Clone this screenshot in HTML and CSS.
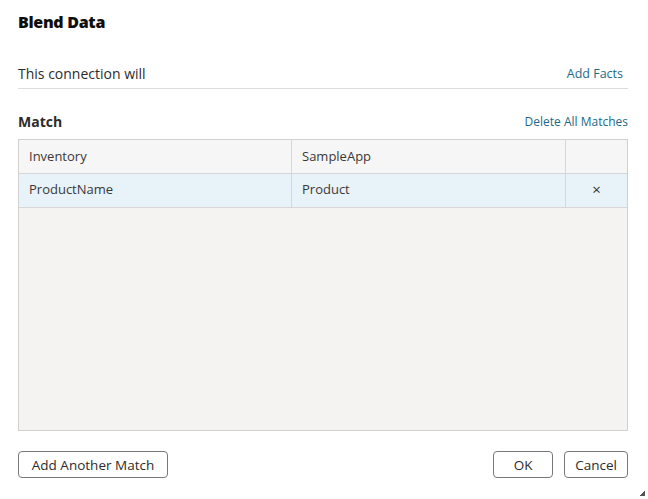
FILE: index.html
```html
<!DOCTYPE html>
<html>
<head>
<meta charset="utf-8">
<link rel="stylesheet" href="styles.css">
</head>
<body>
<div class="dialog">
  <h1 class="title">Blend Data</h1>
  <div class="conn-row">
    <span class="conn-text">This connection will</span>
    <a class="link">Add Facts</a>
  </div>
  <div class="match-row">
    <span class="match-title">Match</span>
    <a class="link small">Delete All Matches</a>
  </div>
  <div class="table">
    <div class="row head">
      <div class="cell c1">Inventory</div>
      <div class="cell c2">SampleApp</div>
      <div class="cell c3"></div>
    </div>
    <div class="row sel">
      <div class="cell c1">ProductName</div>
      <div class="cell c2">Product</div>
      <div class="cell c3"><span class="x">×</span></div>
    </div>
  </div>
  <div class="footer">
    <button class="btn wide">Add Another Match</button>
    <div class="right">
      <button class="btn ok">OK</button>
      <button class="btn">Cancel</button>
    </div>
  </div>
  <div class="grip"></div>
</div>
</body>
</html>
```
FILE: styles.css
```css
html, body {
  margin: 0;
  padding: 0;
  background: #fff;
}
body {
  font-family: "Open Sans", "Noto Sans", sans-serif;
  color: #161513;
  width: 648px;
  height: 499px;
  overflow: hidden;
}
.dialog {
  position: relative;
  box-sizing: border-box;
  width: 648px;
  height: 499px;
  padding: 12px 20px 0 18px;
  display: flex;
  flex-direction: column;
}
.title {
  margin: 0;
  font-size: 16px;
  font-weight: 800;
  line-height: 20px;
  letter-spacing: -0.3px;
  color: #0f0e0c;
}
.conn-row {
  margin-top: 30px;
  display: flex;
  justify-content: space-between;
  align-items: center;
  height: 22px;
  border-bottom: 1px solid #dedcda;
  padding-bottom: 4px;
}
.conn-text {
  font-size: 14px;
  color: #2d2c2a;
}
.link {
  color: #1d6a86;
  font-size: 12.5px;
  padding-right: 5px;
}
.link.small {
  padding-right: 0;
  font-size: 12px;
}
.match-row {
  margin-top: 22px;
  display: flex;
  justify-content: space-between;
  align-items: center;
  height: 20px;
}
.match-title {
  font-size: 14px;
  font-weight: 700;
  color: #2d2c2a;
}
.table {
  margin-top: 8px;
  height: 292px;
  box-sizing: border-box;
  border: 1px solid #d3d1cf;
  background: #f4f3f1;
}
.row {
  display: grid;
  grid-template-columns: 273px 274px 1fr;
  height: 34px;
  border-bottom: 1px solid #d9d7d5;
  box-sizing: border-box;
}
.row.head {
  background: #f6f6f6;
}
.row.sel {
  background: #e7f2f9;
}
.cell {
  display: flex;
  align-items: center;
  padding: 0 0 2px 10px;
  font-size: 13px;
  color: #3a3937;
  border-right: 1px solid #d9d7d5;
}
.row.sel .cell {
  padding-bottom: 4px;
}
.cell.c3 {
  border-right: none;
  justify-content: center;
  padding-left: 0;
}
.x {
  font-size: 15px;
  color: #333;
}
.footer {
  margin-top: 20px;
  display: flex;
  justify-content: space-between;
}
.right {
  display: flex;
  gap: 11px;
}
.btn {
  font-family: "Open Sans", "Noto Sans", sans-serif;
  font-size: 13.5px;
  color: #2d2c2a;
  background: #fff;
  border: 1px solid #7a7875;
  border-radius: 4px;
  height: 27px;
  padding: 0 10px;
}
.btn.wide {
  width: 150px;
  padding: 0;
}
.btn.ok {
  width: 60px;
}
.grip {
  position: absolute;
  right: 3px;
  bottom: 3px;
  width: 5px;
  height: 5px;
  background: linear-gradient(135deg, transparent 50%, #555 50%);
}
```
